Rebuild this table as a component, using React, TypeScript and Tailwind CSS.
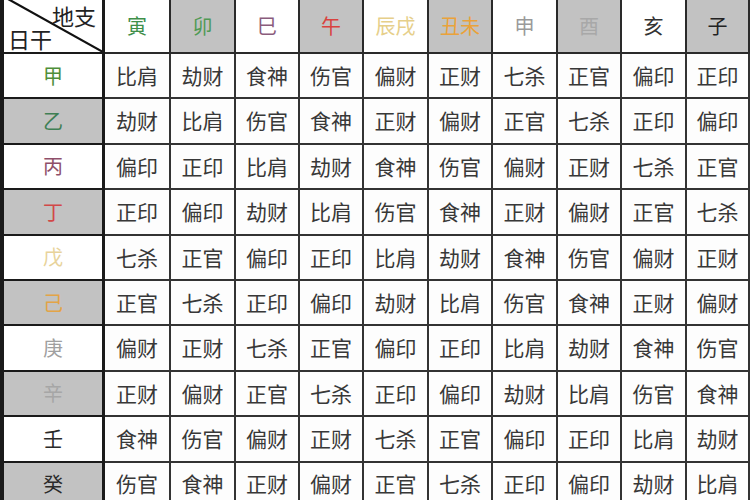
import React from 'react'

const branches = [
  { name: '寅', color: 'text-[#3f8f4a]', gray: false },
  { name: '卯', color: 'text-[#4f9a55]', gray: true },
  { name: '巳', color: 'text-[#8a5c7c]', gray: false },
  { name: '午', color: 'text-[#d9423f]', gray: true },
  { name: '辰戌', color: 'text-[#e6cf8a]', gray: false },
  { name: '丑未', color: 'text-[#eaa23a]', gray: true },
  { name: '申', color: 'text-[#9a9a9a]', gray: false },
  { name: '酉', color: 'text-[#a8a8a8]', gray: true },
  { name: '亥', color: 'text-[#333333]', gray: false },
  { name: '子', color: 'text-[#222222]', gray: true },
]

const stems = [
  { name: '甲', color: 'text-[#4f8f3a]', gray: false },
  { name: '乙', color: 'text-[#3f7f55]', gray: true },
  { name: '丙', color: 'text-[#8f4f6a]', gray: false },
  { name: '丁', color: 'text-[#d24848]', gray: true },
  { name: '戊', color: 'text-[#e8d39a]', gray: false },
  { name: '己', color: 'text-[#e3a447]', gray: true },
  { name: '庚', color: 'text-[#a0a0a0]', gray: false },
  { name: '辛', color: 'text-[#a6a6a6]', gray: true },
  { name: '壬', color: 'text-[#2a2a2a]', gray: false },
  { name: '癸', color: 'text-[#2a2a2a]', gray: true },
]

const table = [
  ['比肩', '劫财', '食神', '伤官', '偏财', '正财', '七杀', '正官', '偏印', '正印'],
  ['劫财', '比肩', '伤官', '食神', '正财', '偏财', '正官', '七杀', '正印', '偏印'],
  ['偏印', '正印', '比肩', '劫财', '食神', '伤官', '偏财', '正财', '七杀', '正官'],
  ['正印', '偏印', '劫财', '比肩', '伤官', '食神', '正财', '偏财', '正官', '七杀'],
  ['七杀', '正官', '偏印', '正印', '比肩', '劫财', '食神', '伤官', '偏财', '正财'],
  ['正官', '七杀', '正印', '偏印', '劫财', '比肩', '伤官', '食神', '正财', '偏财'],
  ['偏财', '正财', '七杀', '正官', '偏印', '正印', '比肩', '劫财', '食神', '伤官'],
  ['正财', '偏财', '正官', '七杀', '正印', '偏印', '劫财', '比肩', '伤官', '食神'],
  ['食神', '伤官', '偏财', '正财', '七杀', '正官', '偏印', '正印', '比肩', '劫财'],
  ['伤官', '食神', '正财', '偏财', '正官', '七杀', '正印', '偏印', '劫财', '比肩'],
]

const font = { fontFamily: '"Noto Sans CJK SC", "Noto Sans", sans-serif' }

export default function App() {
  return (
    <div className="h-[500px] w-[750px] overflow-hidden bg-white" style={font}>
      <div className="grid grid-cols-[105px_66px_65px_64px_64px_65px_64px_65px_64px_65px_63px] grid-rows-[54px_repeat(10,45.4px)]">
        {/* corner cell */}
        <div className="relative border-b-2 border-l-4 border-r-[3px] border-[#1a1a1a] bg-white">
          <svg className="absolute inset-0" width="98" height="52" viewBox="0 0 98 52">
            <line x1="4" y1="-1" x2="99" y2="52" stroke="#111" strokeWidth="2.2" />
          </svg>
          <span className="absolute right-[6px] top-[4px] text-[22px] leading-none text-[#222]">地支</span>
          <span className="absolute bottom-[3px] left-[4px] text-[22px] leading-none text-[#222]">日干</span>
        </div>
        {branches.map((b) => (
          <div
            key={b.name}
            className={`flex items-center justify-center border-b-2 border-r-2 border-[#2a2a2a] text-[20px] ${b.color} ${b.gray ? 'bg-[#c2c2c2]' : 'bg-white'}`}
          >
            {b.name}
          </div>
        ))}
        {stems.map((s, i) => (
          <React.Fragment key={s.name}>
            <div
              className={`flex items-center justify-center border-b-2 border-l-4 border-r-[3px] border-[#1a1a1a] text-[20px] ${s.color} ${s.gray ? 'bg-[#c2c2c2]' : 'bg-white'}`}
            >
              {s.name}
            </div>
            {table[i].map((v, j) => (
              <div
                key={j}
                className="flex items-center justify-center border-b-2 border-r-2 border-[#333] bg-[#fdfdfd] text-[21px] text-[#383838]"
              >
                {v}
              </div>
            ))}
          </React.Fragment>
        ))}
      </div>
    </div>
  )
}
